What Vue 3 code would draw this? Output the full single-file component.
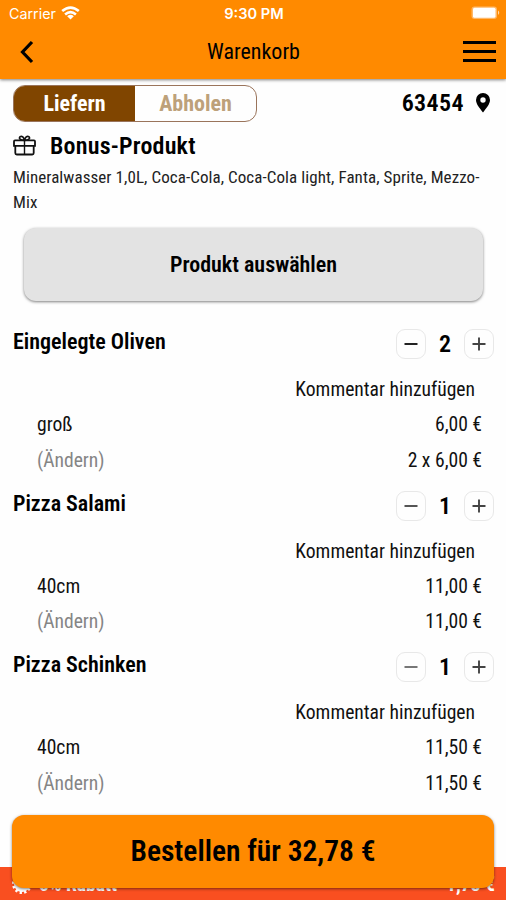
<script setup>
const items = [
  { name: 'Eingelegte Oliven', qty: 2, size: 'groß', price: '6,00 €', total: '2 x 6,00 €', minus: '#222' },
  { name: 'Pizza Salami', qty: 1, size: '40cm', price: '11,00 €', total: '11,00 €', minus: '#555' },
  { name: 'Pizza Schinken', qty: 1, size: '40cm', price: '11,50 €', total: '11,50 €', minus: '#777' },
]
</script>

<template>
  <div class="screen">
    <header class="header">
      <div class="status">
        <div class="carrier">
          <span>Carrier</span>
          <svg width="19" height="14" viewBox="0 0 19 14" fill="none" stroke="#fff" stroke-width="2.6">
            <path d="M1.2 5.1Q9.5-2 17.8 5.1M4.1 8.4Q9.5 3.8 14.9 8.4" />
            <path d="M9.5 13.4 6.2 10.200Q9.5 7.500 12.8 10.200Z" fill="#fff" stroke="none" />
          </svg>
        </div>
        <span class="time">9:30 PM</span>
        <svg class="battery" width="30" height="14" viewBox="0 0 30 14">
          <rect x=".5" y=".5" width="25.500" height="12.500" rx="3" fill="#ffb766" />
          <rect x="2" y="1.700" width="22.500" height="10" rx="1.500" fill="#fff" />
          <path d="M27 4.500q2.500 2.200 0 4.500z" fill="#ffd7a6" />
        </svg>
      </div>
      <div class="nav">
        <svg class="back" width="14" height="24" viewBox="0 0 14 24" fill="none" stroke="#000" stroke-width="3.200">
          <path d="M12 2 2.500 12 12 22" />
        </svg>
        <h1>Warenkorb</h1>
        <div class="burger"><i></i><i></i><i></i></div>
      </div>
    </header>

    <div class="mode">
      <div class="tabs">
        <div class="tab active"><span>Liefern</span></div>
        <div class="tab"><span>Abholen</span></div>
      </div>
      <div class="place">
        <span>63454</span>
        <svg width="14" height="20" viewBox="0 0 14 20">
          <path fill="#000" fill-rule="evenodd" d="M7 0a7 7 0 0 1 7 7c0 4.200-3.800 8.200-7 12.500C3.800 15.200 0 11.200 0 7a7 7 0 0 1 7-7zm0 4.300a2.700 2.700 0 1 0 0 5.400 2.700 2.700 0 0 0 0-5.400z" />
        </svg>
      </div>
    </div>

    <section class="bonus">
      <div class="bonus-title">
        <svg width="23" height="21" viewBox="0 0 23 21" fill="none" stroke="#111">
          <path stroke-width="1.800" d="M2 5.400h19q1 0 1 1v4.400H1V6.400q0-1 1-1zM2.300 10.800v7.200q0 1.500 1.500 1.500h15.400q1.500 0 1.500-1.500v-7.200" />
          <path stroke-width="1.400" d="M11.500 5.500V19.500" />
          <path stroke-width="1.700" d="M11.500 5.400C6.500 5.400 5.800 3 7.200 1.700 8.800.4 11 2.500 11.500 5.400 12 2.500 14.200.4 15.800 1.700 17.200 3 16.500 5.400 11.500 5.400Z" />
        </svg>
        <h2>Bonus-Produkt</h2>
      </div>
      <p>Mineralwasser 1,0L, Coca-Cola, Coca-Cola light, Fanta, Sprite, Mezzo-<br />Mix</p>
      <button class="choose">Produkt auswählen</button>
    </section>

    <section v-for="item in items" :key="item.name" class="item">
      <div class="item-head">
        <h3>{{ item.name }}</h3>
        <div class="stepper">
          <button><svg width="14" height="14" viewBox="0 0 14 14"><path d="M.500 7h13" :stroke="item.minus" stroke-width="2" /></svg></button>
          <b>{{ item.qty }}</b>
          <button><svg width="14" height="14" viewBox="0 0 14 14"><path d="M.500 7h13M7 .500v13" stroke="#444" stroke-width="1.900" /></svg></button>
        </div>
      </div>
      <div class="comment">Kommentar hinzufügen</div>
      <div class="line"><span>{{ item.size }}</span><span>{{ item.price }}</span></div>
      <div class="line"><span class="edit">(Ändern)</span><span>{{ item.total }}</span></div>
    </section>

    <footer class="discount">
      <div class="discount-label">
        <svg width="20" height="20" viewBox="0 0 20 20">
          <circle cx="10" cy="10" r="8" fill="#fff" />
          <circle cx="10" cy="10" r="8.500" fill="none" stroke="#fff" stroke-width="3" stroke-dasharray="2.225" />
        </svg>
        <span>5% Rabatt</span>
      </div>
      <span>1,73 €</span>
    </footer>
    <button class="order">Bestellen für 32,78 €</button>
  </div>
</template>

<style>
body { margin: 0; background: #fff; }
</style>

<style scoped>
* { box-sizing: border-box; }
.screen {
  position: relative; width: 506px; height: 900px; overflow: hidden; background: #fefefe; color: #111;
  font-family: "Roboto Condensed", Roboto, sans-serif; font-stretch: 75%; font-size: 20px; font-weight: 400;
  display: flex; flex-direction: column; white-space: nowrap;
}
h1, h2, h3, p { margin: 0; }
h1, h2, h3, b, .place, .choose, .order { color: #000; }
button { font: inherit; color: inherit; border: 0; padding: 0; }
svg { display: block; flex: none; }
.header { height: 79px; flex: none; background: #ff8a00; box-shadow: 0 1px 3px rgba(0, 0, 0, .5); }
.status {
  height: 27px; padding: 0 5px 0 9px; display: grid; grid-template-columns: 1fr auto 1fr; align-items: center;
  font: 14.300px Inter, sans-serif; color: #fff;
}
.carrier { display: flex; gap: 5px; align-items: center; }
.carrier svg { margin-top: -2px; }
.time { font-weight: 600; font-size: 14.600px; position: relative; left: -1px; }
.battery { justify-self: end; margin: -2px 0 0; }
.nav { height: 49px; padding: 0 10px 0 11px; display: grid; grid-template-columns: 1fr auto 1fr; align-items: center; }
.back { margin-left: 9px; }
h1 { font-size: 22px; font-weight: 400; }
.burger { justify-self: end; width: 33px; display: flex; flex-direction: column; gap: 6px; }
.burger i { height: 3px; background: #000; }
.mode { height: 49px; padding: 6px 16px 6px 13px; display: flex; justify-content: space-between; align-items: center; }
.tabs { width: 244px; height: 37px; border: 1px solid #9a745b; border-radius: 12px; overflow: hidden; display: flex; font-weight: 700; font-size: 22px; }
.tab { flex: 1; display: flex; align-items: center; justify-content: center; color: #bda17a; padding-bottom: 1px; }
.tab.active { background: #804500; color: #fff; }
.place { display: flex; align-items: center; gap: 12px; font-size: 24px; font-weight: 600; letter-spacing: .4px; }
.place span { margin-top: -2px; }
.place svg { margin-top: -2px; }
.bonus { height: 196px; padding: 4px 13px 0; }
.bonus-title { display: flex; align-items: center; gap: 14px; height: 29px; }
h2 { font-size: 24px; letter-spacing: .2px; font-weight: 650; margin-top: -2px; }
p { font-size: 17px; line-height: 25px; letter-spacing: .07px; color: #222; margin-top: 4px; }
.bonus-title svg { margin-top: -2px; }
.choose { display: block; margin: 13px 10px 0 11px; padding-bottom: 1px; width: 459px; height: 73px; border-radius: 12px; background: #e3e3e3; font-size: 22px; font-weight: 650; box-shadow: 0 1px 3px rgba(0, 0, 0, .5); }
.item { height: 161.500px; flex: none; padding: 0 12px 0 13px; }
.item-head { height: 47px; display: flex; justify-content: space-between; align-items: flex-start; }
h3 { font-size: 22px; line-height: 25px; font-weight: 650; margin-top: 5px; }
.stepper { display: flex; align-items: center; margin-top: 5px; }
.stepper button { width: 30px; height: 30px; border: 1px solid #e8e8e8; border-radius: 9px; background: #fefefe; display: grid; place-items: center; }
.stepper b { width: 38px; text-align: center; font-size: 24px; line-height: 30px; font-weight: 650; }
.comment { text-align: right; padding-right: 19px; height: 36px; line-height: 37px; font-size: 19.600px; }
.line { height: 35.500px; line-height: 35px; padding: 0 12px 0 24px; display: flex; justify-content: space-between; font-size: 19.600px; }
.edit { color: #858585; }
.order { position: absolute; left: 12px; top: 815px; width: 482px; height: 73px; padding-bottom: 2px; border-radius: 12px; background: #ff8a00; font-size: 29.500px; font-weight: 650; box-shadow: 0 1px 3px rgba(0, 0, 0, .5); }
.discount { position: absolute; left: 0; right: 0; bottom: 0; height: 33px; padding: 0 11px 0 12px; background: #f94f20; color: #fff; display: flex; justify-content: space-between; align-items: center; font-size: 19.600px; font-weight: 700; }
.discount > span, .discount-label span { margin-top: 1px; }
.discount-label { display: flex; align-items: center; gap: 7px; }
</style>
